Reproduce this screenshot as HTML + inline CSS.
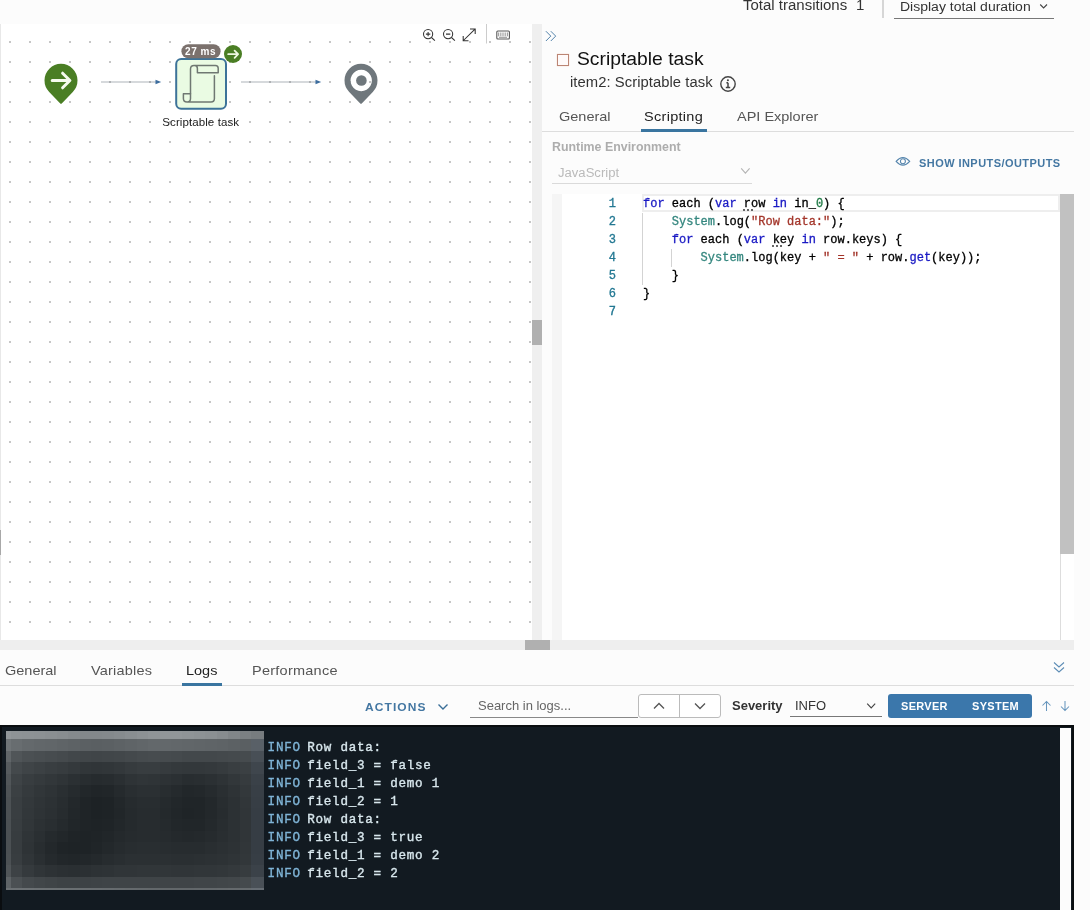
<!DOCTYPE html>
<html>
<head>
<meta charset="utf-8">
<style>
*{box-sizing:border-box;margin:0;padding:0}
html,body{width:1090px;height:910px;overflow:hidden;background:#fcfcfc;font-family:"Liberation Sans",sans-serif;color:#333}
.abs{position:absolute}
#root{position:relative;width:1090px;height:910px;overflow:hidden;will-change:transform}
.t{position:absolute;white-space:nowrap;line-height:1;transform-origin:0 0;transform:scaleX(1.07)}
/* canvas */
#canvas{left:0;top:24px;width:532px;height:616px;background-color:#fff;
 background-image:radial-gradient(circle, #c6c6c6 0, #c6c6c6 1px, rgba(255,255,255,0) 1.3px);
 background-size:20px 20px;background-position:0px 8px;}
#vbar{left:532px;top:24px;width:10px;height:616px;background:#efefef}
#vthumb{left:532px;top:320px;width:10px;height:25px;background:#b0b0b0}
#hbar{left:0;top:640px;width:1074px;height:10px;background:#eeeeee}
#hthumb{left:525px;top:640px;width:25px;height:10px;background:#b0b0b0}
#rpanel{left:542px;top:24px;width:532px;height:616px;background:transparent}
#editor{left:562px;top:194px;width:498px;height:446px;background:#fff}
#egut{left:552px;top:194px;width:10px;height:446px;background:#f5f5f5}
#curline{left:642px;top:194px;width:418px;height:18px;border:2px solid #eee}
#escroll{left:1060px;top:194px;width:14px;height:446px;background:#fff;border-left:1px solid #ddd}
#ethumb{left:1060px;top:194px;width:14px;height:360px;background:#c1c1c1}
.code{font-family:"Liberation Mono",monospace;font-size:12px;line-height:18px;color:#000;white-space:pre;-webkit-text-stroke:0.3px}
.ln{font-family:"Liberation Mono",monospace;font-size:12px;line-height:18px;color:#237893;text-align:right;width:20px;-webkit-text-stroke:0.3px}
.kw{color:#1a1ac4}.ty{color:#35877f}.st{color:#a3352a}.nu{color:#1f7a45}
/* bottom */
#log{left:0;top:725px;width:1074px;height:185px;background:#121a21;border:2px solid #0a0d10;border-bottom:none}
#lscroll{left:1060px;top:728px;width:11px;height:182px;background:#fcfcfc}
.lg{font-family:"Liberation Mono",monospace;font-size:12.6px;line-height:18px;color:#d8e7ed;white-space:pre;-webkit-text-stroke:0.35px}
.lg i{font-style:normal;color:#7ab3d9}
</style>
</head>
<body>
<div id="root">
 <!-- header -->
 <div class="t" style="left:742.5px;top:-1.77px;font-size:14.02px;color:#333">Total transitions</div>
 <div class="t" style="left:856px;top:-2.17px;font-size:14.02px;color:#333">1</div>
 <div class="abs" style="left:882px;top:0;width:2px;height:18px;background:#d6d6d6"></div>
 <div class="t" style="left:900px;top:-0.22px;font-size:13.08px;color:#333">Display total duration</div>
 <div class="abs" style="left:894px;top:18px;width:160px;height:1px;background:#777"></div>
 <svg class="abs" style="left:1036px;top:1px" width="14" height="10" viewBox="0 0 14 10"><path d="M4.2 3.5 L7.6 7 L11 3.5" fill="none" stroke="#444" stroke-width="1.1"/></svg>

 <!-- canvas -->
 <div id="canvas" class="abs"></div>
 <div class="abs" style="left:0;top:24px;width:1px;height:616px;background:#e8e8e8"></div>
 <div class="abs" style="left:0;top:530px;width:1px;height:25px;background:#a8a8a8"></div>
 <div id="vbar" class="abs"></div><div id="vthumb" class="abs"></div>
 <div id="rpanel" class="abs"></div>

 <!-- workflow svg -->
 <svg class="abs" style="left:0;top:24px" width="532" height="616" viewBox="0 24 532 616">
  <!-- start pin -->
  <path d="M49.2 91.9 A16.5 16.5 0 1 1 72.8 91.9 L62 103.3 Q61 104.4 60 103.3 Z" fill="#4a7e24"/>
  <path d="M52.2 80.5 H69 M62.6 73.2 L69.9 80.5 L62.6 87.8" fill="none" stroke="#f6fbef" stroke-width="3" stroke-linecap="round" stroke-linejoin="round"/>
  <!-- link 1 -->
  <line x1="101" y1="82" x2="157" y2="82" stroke="rgba(120,130,140,0.3)" stroke-width="2"/>
  <path d="M155.5 79.8 L161.2 82 L155.5 84.2 Z" fill="#3d6d9e"/>
  <!-- task -->
  <rect x="176.2" y="59" width="49.8" height="49.8" rx="5" ry="5" fill="#eafbe3" stroke="#3d7399" stroke-width="2"/>
  <g fill="none" stroke="#6f7872" stroke-width="1.5" stroke-linejoin="round" stroke-linecap="round">
   <path d="M190.5 93.7 V69 Q190.5 65.5 194 65.5 H215.5 Q218.2 65.5 218.2 68.3 V72.8 H197.4 V68.5 Q197.4 65.5 194.5 65.5"/>
   <path d="M214.4 75.8 V98.5 Q214.4 102 211 102 H187 Q183.4 102 183.4 98.5 V93.7 H190.5 V98.5 Q190.5 102 187.3 102"/>
  </g>
  <!-- badge -->
  <rect x="181.4" y="44.2" width="39.2" height="14" rx="7" fill="#7b716d"/>
  <text x="200.6" y="54.9" font-family="Liberation Sans, sans-serif" font-weight="bold" font-size="10" fill="#fff" text-anchor="middle" letter-spacing="0.55">27 ms</text>
  <circle cx="233" cy="54" r="9" fill="#4a7e24"/>
  <path d="M228.2 54.2 H237.5 M234.6 50.6 L238.1 54.2 L234.6 57.8" fill="none" stroke="#eef8e0" stroke-width="1.8" stroke-linecap="round" stroke-linejoin="round"/>
  <text transform="translate(200.7,125.6) scale(1.075,1)" x="0" y="0" font-family="Liberation Sans, sans-serif" font-size="10.75" fill="#222" text-anchor="middle" letter-spacing="0.06">Scriptable task</text>
  <!-- link 2 -->
  <line x1="241" y1="82" x2="317" y2="82" stroke="rgba(120,130,140,0.3)" stroke-width="2"/>
  <path d="M315.5 79.8 L321.2 82 L315.5 84.2 Z" fill="#3d6d9e"/>
  <!-- end pin -->
  <path fill-rule="evenodd" d="M349.2 91.9 A16.5 16.5 0 1 1 372.8 91.9 L362 103.3 Q361 104.4 360 103.3 Z M361.2 69.8 a10.7 10.7 0 1 0 0.01 0 Z" fill="#6f777c"/>
  <circle cx="361.4" cy="80.5" r="5.3" fill="#6f777c"/>
  <!-- toolbar -->
  <g fill="none" stroke="#333" stroke-width="1.05">
   <circle cx="428.1" cy="34.1" r="4.6"/><path d="M431.5 37.5 L434.9 40.7 M425.9 34.1 H430.3 M428.1 31.9 V36.3"/>
   <circle cx="448.1" cy="34.1" r="4.6"/><path d="M451.5 37.5 L454.9 40.7 M446 34.1 H450.3"/>
   <path d="M463.4 40.5 L475 29.1 M470 28.9 H475.2 V34.1 M463.2 36.1 V40.7 H468.5"/>
   <rect x="496.8" y="31" width="12.6" height="8" rx="1" stroke="#5a5a5a" stroke-width="1.1"/>
   <path d="M498.5 32.5 V36.3 M500.3 32.5 V36.3 M502.1 32.5 V36.3 M503.9 32.5 V36.3 M505.7 32.5 V36.3 M507.5 32.5 V36.3" stroke="#8a8a8a" stroke-width="0.8"/>
   <path d="M499 37.3 H507" stroke="#777" stroke-width="0.8"/>
  </g>
  <line x1="486.5" y1="24" x2="486.5" y2="43.5" stroke="#ccc" stroke-width="1"/>
 </svg>

 <!-- right panel header -->
 <svg class="abs" style="left:545px;top:30px" width="12" height="12" viewBox="0 0 12 12"><path d="M0.9 1.2 L5.8 6.1 L0.9 11 M5.8 1.2 L10.7 6.1 L5.8 11" fill="none" stroke="#5383ab" stroke-width="1"/></svg>
 <div class="abs" style="left:557px;top:54px;width:12px;height:12px;border:1px solid #bb8574;background:#fefafa;box-shadow:0 0 1px #f0c0b0"></div>
 <div class="t" style="left:577px;top:49.67px;font-size:18.04px;color:#111">Scriptable task</div>
 <div class="t" style="left:570px;top:76.4px;font-size:13.83px;letter-spacing:0.05px;color:#333">item2: Scriptable task</div>
 <svg class="abs" style="left:720px;top:76px" width="16" height="16" viewBox="0 0 16 16"><circle cx="8" cy="8" r="7.2" fill="none" stroke="#444" stroke-width="1.4"/><path d="M8 6.7 V11.6 M6.4 6.7 H8 M5.8 11.6 H10.2" stroke="#444" stroke-width="1.5" fill="none"/><circle cx="7.9" cy="4.2" r="1.05" fill="#444"/></svg>
 <div class="t" style="left:559px;top:109.80px;font-size:13.55px;color:#555">General</div>
 <div class="t" style="left:644px;top:109.80px;font-size:13.55px;letter-spacing:0.28px;color:#222">Scripting</div>
 <div class="t" style="left:737px;top:109.80px;font-size:13.55px;color:#555">API Explorer</div>
 <div class="abs" style="left:542px;top:131px;width:532px;height:1px;background:#ddd"></div>
 <div class="abs" style="left:641px;top:129px;width:66px;height:3px;background:#3a75a0"></div>
 <div class="t" style="left:552px;top:139.70px;font-size:13.00px;font-weight:bold;color:#adadad;transform:scaleX(0.952)">Runtime Environment</div>
 <div class="t" style="left:558px;top:166.5px;font-size:12.0px;color:#bababa;transform:scaleX(1.09)">JavaScript</div>
 <svg class="abs" style="left:738px;top:166px" width="14" height="10" viewBox="0 0 14 10"><path d="M3.2 2.3 L7.4 7.2 L11.6 2.3" fill="none" stroke="#b4b4b4" stroke-width="1.1"/></svg>
 <div class="abs" style="left:552px;top:183px;width:200px;height:1px;background:#dadada"></div>
 <svg class="abs" style="left:895px;top:155px" width="16" height="12" viewBox="0 0 16 12"><path d="M1.1 6.3 Q7.9 -1.3 14.7 6.3 Q7.9 13.9 1.1 6.3 Z" fill="none" stroke="#5585ad" stroke-width="1.05"/><circle cx="7.9" cy="6.3" r="2.5" fill="none" stroke="#5585ad" stroke-width="1.05"/></svg>
 <div class="t" style="left:919px;top:158.61px;font-size:10.28px;font-weight:bold;color:#4477a2;letter-spacing:0.42px">SHOW INPUTS/OUTPUTS</div>

 <!-- editor -->
 <div id="egut" class="abs"></div>
 <div id="editor" class="abs"></div>
 <div id="curline" class="abs"></div>
 <div id="escroll" class="abs"></div><div id="ethumb" class="abs"></div>
 <div class="abs ln" style="left:596px;top:195px">1<br>2<br>3<br>4<br>5<br>6<br>7</div>
 <div class="abs" style="left:642px;top:213px;width:1px;height:72px;background:#d3d3d3"></div>
 <div class="abs" style="left:671px;top:249px;width:1px;height:18px;background:#d3d3d3"></div>
 <div class="abs" style="left:743px;top:209px;width:10px;height:2px;background:repeating-linear-gradient(90deg,#666 0,#666 2px,transparent 2px,transparent 4px)"></div>
 <div class="abs" style="left:772px;top:245px;width:10px;height:2px;background:repeating-linear-gradient(90deg,#666 0,#666 2px,transparent 2px,transparent 4px)"></div>
 <div class="abs code" style="left:643px;top:195px"><span class="kw">for</span> each (<span class="kw">var</span> row <span class="kw">in</span> in_<span class="nu">0</span>) {
    <span class="ty">System</span>.log(<span class="st">"Row data<b style="font-weight:normal">:</b>"</span>);
    <span class="kw">for</span> each (<span class="kw">var</span> key <span class="kw">in</span> row.keys) {
        <span class="ty">System</span>.log(key + <span class="st">" = "</span> + row.<span class="kw">get</span>(key));
    }
}</div>

 <!-- scrollbars -->
 <div id="hbar" class="abs"></div><div id="hthumb" class="abs"></div>

 <!-- bottom tabs -->
 <div class="t" style="left:5px;top:663.80px;font-size:13.55px;color:#555">General</div>
 <div class="t" style="left:91px;top:663.80px;font-size:13.55px;letter-spacing:0.19px;color:#555">Variables</div>
 <div class="t" style="left:186px;top:663.80px;font-size:13.55px;color:#222">Logs</div>
 <div class="t" style="left:252px;top:663.80px;font-size:13.55px;letter-spacing:0.23px;color:#555">Performance</div>
 <div class="abs" style="left:0;top:685px;width:1074px;height:1px;background:#ddd"></div>
 <div class="abs" style="left:182px;top:683px;width:40px;height:3px;background:#3a75a0"></div>
 <svg class="abs" style="left:1053px;top:661px" width="12" height="13" viewBox="0 0 12 13"><path d="M1 1.5 L6 6 L11 1.5 M1 6.5 L6 11 L11 6.5" fill="none" stroke="#5c8cb5" stroke-width="1.05"/></svg>

 <!-- log toolbar -->
 <div class="t" style="left:365px;top:701.66px;font-size:11.21px;font-weight:bold;color:#4477a2;letter-spacing:1.03px">ACTIONS</div>
 <svg class="abs" style="left:437px;top:702px" width="12" height="10" viewBox="0 0 12 10"><path d="M1.5 2.5 L6 7 L10.5 2.5" fill="none" stroke="#3a6f98" stroke-width="1.4"/></svg>
 <div class="t" style="left:478px;top:699.72px;font-size:12.15px;color:#666">Search in logs...</div>
 <div class="abs" style="left:470px;top:717px;width:168px;height:1px;background:#888"></div>
 <div class="abs" style="left:638px;top:694px;width:83px;height:24px;border:1px solid #bbb;border-radius:3px;background:#fff"></div>
 <div class="abs" style="left:679px;top:694px;width:1px;height:24px;background:#bbb"></div>
 <svg class="abs" style="left:652px;top:701px" width="14" height="10" viewBox="0 0 14 10"><path d="M2 7.5 L7 2.5 L12 7.5" fill="none" stroke="#555" stroke-width="1.3"/></svg>
 <svg class="abs" style="left:693px;top:701px" width="14" height="10" viewBox="0 0 14 10"><path d="M2 2.5 L7 7.5 L12 2.5" fill="none" stroke="#555" stroke-width="1.3"/></svg>
 <div class="t" style="left:732px;top:699.72px;font-size:12.15px;font-weight:bold;color:#333">Severity</div>
 <div class="t" style="left:795px;top:699.72px;font-size:12.15px;color:#333">INFO</div>
 <svg class="abs" style="left:865px;top:701px" width="12" height="10" viewBox="0 0 12 10"><path d="M2.2 2.6 L6.2 6.8 L10.2 2.6" fill="none" stroke="#444" stroke-width="1.15"/></svg>
 <div class="abs" style="left:790px;top:716px;width:92px;height:1px;background:#777"></div>
 <div class="abs" style="left:888px;top:694px;width:144px;height:24px;border-radius:3px;background:#3b77ab"></div>
 <div class="t" style="left:901px;top:701.61px;font-size:10.28px;font-weight:bold;color:#fff;letter-spacing:0.28px">SERVER</div>
 <div class="t" style="left:972px;top:701.61px;font-size:10.28px;font-weight:bold;color:#fff;letter-spacing:0.28px">SYSTEM</div>
 <svg class="abs" style="left:1041px;top:700px" width="30" height="12" viewBox="0 0 30 12"><path d="M5.5 11 V1.5 M1.5 5.5 L5.5 1.5 L9.5 5.5 M24 1 V10.5 M20 6.5 L24 10.5 L28 6.5" fill="none" stroke="#6796bd" stroke-width="1.05"/></svg>

 <!-- log -->
 <div id="log" class="abs"></div>
 <div id="lscroll" class="abs"></div>
 <svg id="blur" class="abs" style="left:6px;top:731px" width="257.5" height="158.5" viewBox="0 0 257.5 158.5" shape-rendering="crispEdges"><rect x="0.0" y="0.0" width="5.2" height="8.5" fill="#92979a"/><rect x="4.9" y="0.0" width="11.7" height="8.5" fill="#8e9396"/><rect x="16.3" y="0.0" width="11.7" height="8.5" fill="#8d9295"/><rect x="27.8" y="0.0" width="11.7" height="8.5" fill="#8c9194"/><rect x="39.2" y="0.0" width="11.7" height="8.5" fill="#8a8f92"/><rect x="50.6" y="0.0" width="11.7" height="8.5" fill="#888d90"/><rect x="62.0" y="0.0" width="11.7" height="8.5" fill="#858a8d"/><rect x="73.5" y="0.0" width="11.7" height="8.5" fill="#83888b"/><rect x="84.9" y="0.0" width="11.7" height="8.5" fill="#83888b"/><rect x="96.3" y="0.0" width="11.7" height="8.5" fill="#84898c"/><rect x="107.8" y="0.0" width="11.7" height="8.5" fill="#868b8e"/><rect x="119.2" y="0.0" width="11.7" height="8.5" fill="#898e91"/><rect x="130.6" y="0.0" width="11.7" height="8.5" fill="#8c9194"/><rect x="142.1" y="0.0" width="11.7" height="8.5" fill="#8f9497"/><rect x="153.5" y="0.0" width="11.7" height="8.5" fill="#919699"/><rect x="164.9" y="0.0" width="11.7" height="8.5" fill="#919699"/><rect x="176.4" y="0.0" width="11.7" height="8.5" fill="#8f9497"/><rect x="187.8" y="0.0" width="11.7" height="8.5" fill="#8d9295"/><rect x="199.2" y="0.0" width="11.7" height="8.5" fill="#8b9093"/><rect x="210.6" y="0.0" width="11.7" height="8.5" fill="#878c8f"/><rect x="222.1" y="0.0" width="11.7" height="8.5" fill="#818689"/><rect x="233.5" y="0.0" width="11.7" height="8.5" fill="#7b8083"/><rect x="244.9" y="0.0" width="12.9" height="8.5" fill="#777c7f"/><rect x="0.0" y="8.2" width="5.2" height="11.8" fill="#6f7477"/><rect x="4.9" y="8.2" width="11.7" height="11.8" fill="#686d70"/><rect x="16.3" y="8.2" width="11.7" height="11.8" fill="#64696c"/><rect x="27.8" y="8.2" width="11.7" height="11.8" fill="#62676a"/><rect x="39.2" y="8.2" width="11.7" height="11.8" fill="#616669"/><rect x="50.6" y="8.2" width="11.7" height="11.8" fill="#5f6467"/><rect x="62.0" y="8.2" width="11.7" height="11.8" fill="#5d6265"/><rect x="73.5" y="8.2" width="11.7" height="11.8" fill="#5b6063"/><rect x="84.9" y="8.2" width="11.7" height="11.8" fill="#5a5f62"/><rect x="96.3" y="8.2" width="11.7" height="11.8" fill="#5b6063"/><rect x="107.8" y="8.2" width="11.7" height="11.8" fill="#5d6265"/><rect x="119.2" y="8.2" width="11.7" height="11.8" fill="#5f6467"/><rect x="130.6" y="8.2" width="11.7" height="11.8" fill="#616669"/><rect x="142.1" y="8.2" width="11.7" height="11.8" fill="#63686b"/><rect x="153.5" y="8.2" width="11.7" height="11.8" fill="#63686b"/><rect x="164.9" y="8.2" width="11.7" height="11.8" fill="#62676a"/><rect x="176.4" y="8.2" width="11.7" height="11.8" fill="#616669"/><rect x="187.8" y="8.2" width="11.7" height="11.8" fill="#606568"/><rect x="199.2" y="8.2" width="11.7" height="11.8" fill="#5f6467"/><rect x="210.6" y="8.2" width="11.7" height="11.8" fill="#5e6366"/><rect x="222.1" y="8.2" width="11.7" height="11.8" fill="#5c6164"/><rect x="233.5" y="8.2" width="11.7" height="11.8" fill="#5a5f62"/><rect x="244.9" y="8.2" width="12.9" height="11.8" fill="#596067"/><rect x="0.0" y="19.7" width="5.2" height="11.8" fill="#616669"/><rect x="4.9" y="19.7" width="11.7" height="11.8" fill="#505558"/><rect x="16.3" y="19.7" width="11.7" height="11.8" fill="#4b5053"/><rect x="27.8" y="19.7" width="11.7" height="11.8" fill="#494e51"/><rect x="39.2" y="19.7" width="11.7" height="11.8" fill="#474c4f"/><rect x="50.6" y="19.7" width="11.7" height="11.8" fill="#454a4d"/><rect x="62.0" y="19.7" width="11.7" height="11.8" fill="#42474a"/><rect x="73.5" y="19.7" width="11.7" height="11.8" fill="#414649"/><rect x="84.9" y="19.7" width="11.7" height="11.8" fill="#404548"/><rect x="96.3" y="19.7" width="11.7" height="11.8" fill="#414649"/><rect x="107.8" y="19.7" width="11.7" height="11.8" fill="#42474a"/><rect x="119.2" y="19.7" width="11.7" height="11.8" fill="#44494c"/><rect x="130.6" y="19.7" width="11.7" height="11.8" fill="#464b4e"/><rect x="142.1" y="19.7" width="11.7" height="11.8" fill="#474c4f"/><rect x="153.5" y="19.7" width="11.7" height="11.8" fill="#464b4e"/><rect x="164.9" y="19.7" width="11.7" height="11.8" fill="#454a4d"/><rect x="176.4" y="19.7" width="11.7" height="11.8" fill="#43484b"/><rect x="187.8" y="19.7" width="11.7" height="11.8" fill="#43484b"/><rect x="199.2" y="19.7" width="11.7" height="11.8" fill="#43484b"/><rect x="210.6" y="19.7" width="11.7" height="11.8" fill="#44494c"/><rect x="222.1" y="19.7" width="11.7" height="11.8" fill="#454a4d"/><rect x="233.5" y="19.7" width="11.7" height="11.8" fill="#464b4e"/><rect x="244.9" y="19.7" width="12.9" height="11.8" fill="#484f56"/><rect x="0.0" y="31.1" width="5.2" height="11.8" fill="#565b5e"/><rect x="4.9" y="31.1" width="11.7" height="11.8" fill="#44494c"/><rect x="16.3" y="31.1" width="11.7" height="11.8" fill="#3f4447"/><rect x="27.8" y="31.1" width="11.7" height="11.8" fill="#3c4144"/><rect x="39.2" y="31.1" width="11.7" height="11.8" fill="#393e41"/><rect x="50.6" y="31.1" width="11.7" height="11.8" fill="#373c3f"/><rect x="62.0" y="31.1" width="11.7" height="11.8" fill="#34393c"/><rect x="73.5" y="31.1" width="11.7" height="11.8" fill="#313639"/><rect x="84.9" y="31.1" width="11.7" height="11.8" fill="#303538"/><rect x="96.3" y="31.1" width="11.7" height="11.8" fill="#313639"/><rect x="107.8" y="31.1" width="11.7" height="11.8" fill="#33383b"/><rect x="119.2" y="31.1" width="11.7" height="11.8" fill="#363b3e"/><rect x="130.6" y="31.1" width="11.7" height="11.8" fill="#383d40"/><rect x="142.1" y="31.1" width="11.7" height="11.8" fill="#383d40"/><rect x="153.5" y="31.1" width="11.7" height="11.8" fill="#363b3e"/><rect x="164.9" y="31.1" width="11.7" height="11.8" fill="#34393c"/><rect x="176.4" y="31.1" width="11.7" height="11.8" fill="#33383b"/><rect x="187.8" y="31.1" width="11.7" height="11.8" fill="#33383b"/><rect x="199.2" y="31.1" width="11.7" height="11.8" fill="#34393c"/><rect x="210.6" y="31.1" width="11.7" height="11.8" fill="#363b3e"/><rect x="222.1" y="31.1" width="11.7" height="11.8" fill="#393e41"/><rect x="233.5" y="31.1" width="11.7" height="11.8" fill="#3b4043"/><rect x="244.9" y="31.1" width="12.9" height="11.8" fill="#3f464d"/><rect x="0.0" y="42.6" width="5.2" height="11.8" fill="#515659"/><rect x="4.9" y="42.6" width="11.7" height="11.8" fill="#3e4346"/><rect x="16.3" y="42.6" width="11.7" height="11.8" fill="#383d40"/><rect x="27.8" y="42.6" width="11.7" height="11.8" fill="#353a3d"/><rect x="39.2" y="42.6" width="11.7" height="11.8" fill="#32373a"/><rect x="50.6" y="42.6" width="11.7" height="11.8" fill="#2f3437"/><rect x="62.0" y="42.6" width="11.7" height="11.8" fill="#2b3033"/><rect x="73.5" y="42.6" width="11.7" height="11.8" fill="#282d30"/><rect x="84.9" y="42.6" width="11.7" height="11.8" fill="#262b2e"/><rect x="96.3" y="42.6" width="11.7" height="11.8" fill="#272c2f"/><rect x="107.8" y="42.6" width="11.7" height="11.8" fill="#2a2f32"/><rect x="119.2" y="42.6" width="11.7" height="11.8" fill="#2e3336"/><rect x="130.6" y="42.6" width="11.7" height="11.8" fill="#303538"/><rect x="142.1" y="42.6" width="11.7" height="11.8" fill="#2f3437"/><rect x="153.5" y="42.6" width="11.7" height="11.8" fill="#2d3235"/><rect x="164.9" y="42.6" width="11.7" height="11.8" fill="#2b3033"/><rect x="176.4" y="42.6" width="11.7" height="11.8" fill="#282d30"/><rect x="187.8" y="42.6" width="11.7" height="11.8" fill="#292e31"/><rect x="199.2" y="42.6" width="11.7" height="11.8" fill="#2b3033"/><rect x="210.6" y="42.6" width="11.7" height="11.8" fill="#2e3336"/><rect x="222.1" y="42.6" width="11.7" height="11.8" fill="#32373a"/><rect x="233.5" y="42.6" width="11.7" height="11.8" fill="#363b3e"/><rect x="244.9" y="42.6" width="12.9" height="11.8" fill="#3a4148"/><rect x="0.0" y="54.0" width="5.2" height="11.8" fill="#4e5356"/><rect x="4.9" y="54.0" width="11.7" height="11.8" fill="#3b4043"/><rect x="16.3" y="54.0" width="11.7" height="11.8" fill="#353a3d"/><rect x="27.8" y="54.0" width="11.7" height="11.8" fill="#313639"/><rect x="39.2" y="54.0" width="11.7" height="11.8" fill="#2e3336"/><rect x="50.6" y="54.0" width="11.7" height="11.8" fill="#2a2f32"/><rect x="62.0" y="54.0" width="11.7" height="11.8" fill="#262b2e"/><rect x="73.5" y="54.0" width="11.7" height="11.8" fill="#22272a"/><rect x="84.9" y="54.0" width="11.7" height="11.8" fill="#202528"/><rect x="96.3" y="54.0" width="11.7" height="11.8" fill="#212629"/><rect x="107.8" y="54.0" width="11.7" height="11.8" fill="#252a2d"/><rect x="119.2" y="54.0" width="11.7" height="11.8" fill="#292e31"/><rect x="130.6" y="54.0" width="11.7" height="11.8" fill="#2b3033"/><rect x="142.1" y="54.0" width="11.7" height="11.8" fill="#2b3033"/><rect x="153.5" y="54.0" width="11.7" height="11.8" fill="#282d30"/><rect x="164.9" y="54.0" width="11.7" height="11.8" fill="#252a2d"/><rect x="176.4" y="54.0" width="11.7" height="11.8" fill="#22272a"/><rect x="187.8" y="54.0" width="11.7" height="11.8" fill="#23282b"/><rect x="199.2" y="54.0" width="11.7" height="11.8" fill="#262b2e"/><rect x="210.6" y="54.0" width="11.7" height="11.8" fill="#2a2f32"/><rect x="222.1" y="54.0" width="11.7" height="11.8" fill="#2e3336"/><rect x="233.5" y="54.0" width="11.7" height="11.8" fill="#33383b"/><rect x="244.9" y="54.0" width="12.9" height="11.8" fill="#383f46"/><rect x="0.0" y="65.5" width="5.2" height="11.8" fill="#4c5154"/><rect x="4.9" y="65.5" width="11.7" height="11.8" fill="#393e41"/><rect x="16.3" y="65.5" width="11.7" height="11.8" fill="#33383b"/><rect x="27.8" y="65.5" width="11.7" height="11.8" fill="#2f3437"/><rect x="39.2" y="65.5" width="11.7" height="11.8" fill="#2c3134"/><rect x="50.6" y="65.5" width="11.7" height="11.8" fill="#282d30"/><rect x="62.0" y="65.5" width="11.7" height="11.8" fill="#23282b"/><rect x="73.5" y="65.5" width="11.7" height="11.8" fill="#1f2427"/><rect x="84.9" y="65.5" width="11.7" height="11.8" fill="#1d2225"/><rect x="96.3" y="65.5" width="11.7" height="11.8" fill="#1e2326"/><rect x="107.8" y="65.5" width="11.7" height="11.8" fill="#22272a"/><rect x="119.2" y="65.5" width="11.7" height="11.8" fill="#262b2e"/><rect x="130.6" y="65.5" width="11.7" height="11.8" fill="#282d30"/><rect x="142.1" y="65.5" width="11.7" height="11.8" fill="#282d30"/><rect x="153.5" y="65.5" width="11.7" height="11.8" fill="#252a2d"/><rect x="164.9" y="65.5" width="11.7" height="11.8" fill="#22272a"/><rect x="176.4" y="65.5" width="11.7" height="11.8" fill="#202528"/><rect x="187.8" y="65.5" width="11.7" height="11.8" fill="#202528"/><rect x="199.2" y="65.5" width="11.7" height="11.8" fill="#23282b"/><rect x="210.6" y="65.5" width="11.7" height="11.8" fill="#282d30"/><rect x="222.1" y="65.5" width="11.7" height="11.8" fill="#2c3134"/><rect x="233.5" y="65.5" width="11.7" height="11.8" fill="#313639"/><rect x="244.9" y="65.5" width="12.9" height="11.8" fill="#373e45"/><rect x="0.0" y="76.9" width="5.2" height="11.8" fill="#4c5154"/><rect x="4.9" y="76.9" width="11.7" height="11.8" fill="#393e41"/><rect x="16.3" y="76.9" width="11.7" height="11.8" fill="#32373a"/><rect x="27.8" y="76.9" width="11.7" height="11.8" fill="#2e3336"/><rect x="39.2" y="76.9" width="11.7" height="11.8" fill="#2b3033"/><rect x="50.6" y="76.9" width="11.7" height="11.8" fill="#272c2f"/><rect x="62.0" y="76.9" width="11.7" height="11.8" fill="#22272a"/><rect x="73.5" y="76.9" width="11.7" height="11.8" fill="#1f2427"/><rect x="84.9" y="76.9" width="11.7" height="11.8" fill="#1d2225"/><rect x="96.3" y="76.9" width="11.7" height="11.8" fill="#1e2326"/><rect x="107.8" y="76.9" width="11.7" height="11.8" fill="#212629"/><rect x="119.2" y="76.9" width="11.7" height="11.8" fill="#252a2d"/><rect x="130.6" y="76.9" width="11.7" height="11.8" fill="#272c2f"/><rect x="142.1" y="76.9" width="11.7" height="11.8" fill="#272c2f"/><rect x="153.5" y="76.9" width="11.7" height="11.8" fill="#24292c"/><rect x="164.9" y="76.9" width="11.7" height="11.8" fill="#212629"/><rect x="176.4" y="76.9" width="11.7" height="11.8" fill="#1f2427"/><rect x="187.8" y="76.9" width="11.7" height="11.8" fill="#202528"/><rect x="199.2" y="76.9" width="11.7" height="11.8" fill="#23282b"/><rect x="210.6" y="76.9" width="11.7" height="11.8" fill="#272c2f"/><rect x="222.1" y="76.9" width="11.7" height="11.8" fill="#2c3134"/><rect x="233.5" y="76.9" width="11.7" height="11.8" fill="#303538"/><rect x="244.9" y="76.9" width="12.9" height="11.8" fill="#363d44"/><rect x="0.0" y="88.4" width="5.2" height="11.8" fill="#4b5053"/><rect x="4.9" y="88.4" width="11.7" height="11.8" fill="#383d40"/><rect x="16.3" y="88.4" width="11.7" height="11.8" fill="#313639"/><rect x="27.8" y="88.4" width="11.7" height="11.8" fill="#2c3134"/><rect x="39.2" y="88.4" width="11.7" height="11.8" fill="#292e31"/><rect x="50.6" y="88.4" width="11.7" height="11.8" fill="#252a2d"/><rect x="62.0" y="88.4" width="11.7" height="11.8" fill="#212629"/><rect x="73.5" y="88.4" width="11.7" height="11.8" fill="#1f2427"/><rect x="84.9" y="88.4" width="11.7" height="11.8" fill="#1e2326"/><rect x="96.3" y="88.4" width="11.7" height="11.8" fill="#1f2427"/><rect x="107.8" y="88.4" width="11.7" height="11.8" fill="#22272a"/><rect x="119.2" y="88.4" width="11.7" height="11.8" fill="#252a2d"/><rect x="130.6" y="88.4" width="11.7" height="11.8" fill="#272c2f"/><rect x="142.1" y="88.4" width="11.7" height="11.8" fill="#272c2f"/><rect x="153.5" y="88.4" width="11.7" height="11.8" fill="#252a2d"/><rect x="164.9" y="88.4" width="11.7" height="11.8" fill="#22272a"/><rect x="176.4" y="88.4" width="11.7" height="11.8" fill="#212629"/><rect x="187.8" y="88.4" width="11.7" height="11.8" fill="#212629"/><rect x="199.2" y="88.4" width="11.7" height="11.8" fill="#24292c"/><rect x="210.6" y="88.4" width="11.7" height="11.8" fill="#282d30"/><rect x="222.1" y="88.4" width="11.7" height="11.8" fill="#2c3134"/><rect x="233.5" y="88.4" width="11.7" height="11.8" fill="#303538"/><rect x="244.9" y="88.4" width="12.9" height="11.8" fill="#363d44"/><rect x="0.0" y="99.8" width="5.2" height="11.8" fill="#4b5053"/><rect x="4.9" y="99.8" width="11.7" height="11.8" fill="#373c3f"/><rect x="16.3" y="99.8" width="11.7" height="11.8" fill="#2f3437"/><rect x="27.8" y="99.8" width="11.7" height="11.8" fill="#2a2f32"/><rect x="39.2" y="99.8" width="11.7" height="11.8" fill="#252a2d"/><rect x="50.6" y="99.8" width="11.7" height="11.8" fill="#22272a"/><rect x="62.0" y="99.8" width="11.7" height="11.8" fill="#1f2427"/><rect x="73.5" y="99.8" width="11.7" height="11.8" fill="#1e2326"/><rect x="84.9" y="99.8" width="11.7" height="11.8" fill="#1f2427"/><rect x="96.3" y="99.8" width="11.7" height="11.8" fill="#212629"/><rect x="107.8" y="99.8" width="11.7" height="11.8" fill="#24292c"/><rect x="119.2" y="99.8" width="11.7" height="11.8" fill="#262b2e"/><rect x="130.6" y="99.8" width="11.7" height="11.8" fill="#272c2f"/><rect x="142.1" y="99.8" width="11.7" height="11.8" fill="#272c2f"/><rect x="153.5" y="99.8" width="11.7" height="11.8" fill="#262b2e"/><rect x="164.9" y="99.8" width="11.7" height="11.8" fill="#24292c"/><rect x="176.4" y="99.8" width="11.7" height="11.8" fill="#23282b"/><rect x="187.8" y="99.8" width="11.7" height="11.8" fill="#24292c"/><rect x="199.2" y="99.8" width="11.7" height="11.8" fill="#262b2e"/><rect x="210.6" y="99.8" width="11.7" height="11.8" fill="#292e31"/><rect x="222.1" y="99.8" width="11.7" height="11.8" fill="#2c3134"/><rect x="233.5" y="99.8" width="11.7" height="11.8" fill="#303538"/><rect x="244.9" y="99.8" width="12.9" height="11.8" fill="#363d44"/><rect x="0.0" y="111.3" width="5.2" height="11.8" fill="#4b5053"/><rect x="4.9" y="111.3" width="11.7" height="11.8" fill="#373c3f"/><rect x="16.3" y="111.3" width="11.7" height="11.8" fill="#2e3336"/><rect x="27.8" y="111.3" width="11.7" height="11.8" fill="#282d30"/><rect x="39.2" y="111.3" width="11.7" height="11.8" fill="#23282b"/><rect x="50.6" y="111.3" width="11.7" height="11.8" fill="#1f2427"/><rect x="62.0" y="111.3" width="11.7" height="11.8" fill="#1e2326"/><rect x="73.5" y="111.3" width="11.7" height="11.8" fill="#1e2326"/><rect x="84.9" y="111.3" width="11.7" height="11.8" fill="#202528"/><rect x="96.3" y="111.3" width="11.7" height="11.8" fill="#23282b"/><rect x="107.8" y="111.3" width="11.7" height="11.8" fill="#262b2e"/><rect x="119.2" y="111.3" width="11.7" height="11.8" fill="#282d30"/><rect x="130.6" y="111.3" width="11.7" height="11.8" fill="#292e31"/><rect x="142.1" y="111.3" width="11.7" height="11.8" fill="#292e31"/><rect x="153.5" y="111.3" width="11.7" height="11.8" fill="#282d30"/><rect x="164.9" y="111.3" width="11.7" height="11.8" fill="#272c2f"/><rect x="176.4" y="111.3" width="11.7" height="11.8" fill="#272c2f"/><rect x="187.8" y="111.3" width="11.7" height="11.8" fill="#272c2f"/><rect x="199.2" y="111.3" width="11.7" height="11.8" fill="#292e31"/><rect x="210.6" y="111.3" width="11.7" height="11.8" fill="#2b3033"/><rect x="222.1" y="111.3" width="11.7" height="11.8" fill="#2d3235"/><rect x="233.5" y="111.3" width="11.7" height="11.8" fill="#313639"/><rect x="244.9" y="111.3" width="12.9" height="11.8" fill="#363d44"/><rect x="0.0" y="122.7" width="5.2" height="11.8" fill="#4c5154"/><rect x="4.9" y="122.7" width="11.7" height="11.8" fill="#383d40"/><rect x="16.3" y="122.7" width="11.7" height="11.8" fill="#303538"/><rect x="27.8" y="122.7" width="11.7" height="11.8" fill="#2a2f32"/><rect x="39.2" y="122.7" width="11.7" height="11.8" fill="#252a2d"/><rect x="50.6" y="122.7" width="11.7" height="11.8" fill="#22272a"/><rect x="62.0" y="122.7" width="11.7" height="11.8" fill="#212629"/><rect x="73.5" y="122.7" width="11.7" height="11.8" fill="#22272a"/><rect x="84.9" y="122.7" width="11.7" height="11.8" fill="#24292c"/><rect x="96.3" y="122.7" width="11.7" height="11.8" fill="#272c2f"/><rect x="107.8" y="122.7" width="11.7" height="11.8" fill="#292e31"/><rect x="119.2" y="122.7" width="11.7" height="11.8" fill="#2b3033"/><rect x="130.6" y="122.7" width="11.7" height="11.8" fill="#2b3033"/><rect x="142.1" y="122.7" width="11.7" height="11.8" fill="#2b3033"/><rect x="153.5" y="122.7" width="11.7" height="11.8" fill="#2b3033"/><rect x="164.9" y="122.7" width="11.7" height="11.8" fill="#2a2f32"/><rect x="176.4" y="122.7" width="11.7" height="11.8" fill="#2a2f32"/><rect x="187.8" y="122.7" width="11.7" height="11.8" fill="#2b3033"/><rect x="199.2" y="122.7" width="11.7" height="11.8" fill="#2c3134"/><rect x="210.6" y="122.7" width="11.7" height="11.8" fill="#2d3235"/><rect x="222.1" y="122.7" width="11.7" height="11.8" fill="#2f3437"/><rect x="233.5" y="122.7" width="11.7" height="11.8" fill="#32373a"/><rect x="244.9" y="122.7" width="12.9" height="11.8" fill="#373e45"/><rect x="0.0" y="134.2" width="5.2" height="11.8" fill="#505558"/><rect x="4.9" y="134.2" width="11.7" height="11.8" fill="#3d4245"/><rect x="16.3" y="134.2" width="11.7" height="11.8" fill="#353a3d"/><rect x="27.8" y="134.2" width="11.7" height="11.8" fill="#303538"/><rect x="39.2" y="134.2" width="11.7" height="11.8" fill="#2d3235"/><rect x="50.6" y="134.2" width="11.7" height="11.8" fill="#2b3033"/><rect x="62.0" y="134.2" width="11.7" height="11.8" fill="#2a2f32"/><rect x="73.5" y="134.2" width="11.7" height="11.8" fill="#2b3033"/><rect x="84.9" y="134.2" width="11.7" height="11.8" fill="#2d3235"/><rect x="96.3" y="134.2" width="11.7" height="11.8" fill="#2e3336"/><rect x="107.8" y="134.2" width="11.7" height="11.8" fill="#303538"/><rect x="119.2" y="134.2" width="11.7" height="11.8" fill="#303538"/><rect x="130.6" y="134.2" width="11.7" height="11.8" fill="#313639"/><rect x="142.1" y="134.2" width="11.7" height="11.8" fill="#313639"/><rect x="153.5" y="134.2" width="11.7" height="11.8" fill="#313639"/><rect x="164.9" y="134.2" width="11.7" height="11.8" fill="#303538"/><rect x="176.4" y="134.2" width="11.7" height="11.8" fill="#303538"/><rect x="187.8" y="134.2" width="11.7" height="11.8" fill="#313639"/><rect x="199.2" y="134.2" width="11.7" height="11.8" fill="#313639"/><rect x="210.6" y="134.2" width="11.7" height="11.8" fill="#32373a"/><rect x="222.1" y="134.2" width="11.7" height="11.8" fill="#34393c"/><rect x="233.5" y="134.2" width="11.7" height="11.8" fill="#373c3f"/><rect x="244.9" y="134.2" width="12.9" height="11.8" fill="#3b4249"/><rect x="0.0" y="145.6" width="5.2" height="11.2" fill="#5e6366"/><rect x="4.9" y="145.6" width="11.7" height="11.2" fill="#4b5053"/><rect x="16.3" y="145.6" width="11.7" height="11.2" fill="#44494c"/><rect x="27.8" y="145.6" width="11.7" height="11.2" fill="#414649"/><rect x="39.2" y="145.6" width="11.7" height="11.2" fill="#3f4447"/><rect x="50.6" y="145.6" width="11.7" height="11.2" fill="#3d4245"/><rect x="62.0" y="145.6" width="11.7" height="11.2" fill="#3d4245"/><rect x="73.5" y="145.6" width="11.7" height="11.2" fill="#3d4245"/><rect x="84.9" y="145.6" width="11.7" height="11.2" fill="#3e4346"/><rect x="96.3" y="145.6" width="11.7" height="11.2" fill="#3f4447"/><rect x="107.8" y="145.6" width="11.7" height="11.2" fill="#3f4447"/><rect x="119.2" y="145.6" width="11.7" height="11.2" fill="#3f4447"/><rect x="130.6" y="145.6" width="11.7" height="11.2" fill="#3f4447"/><rect x="142.1" y="145.6" width="11.7" height="11.2" fill="#3f4447"/><rect x="153.5" y="145.6" width="11.7" height="11.2" fill="#3f4447"/><rect x="164.9" y="145.6" width="11.7" height="11.2" fill="#3f4447"/><rect x="176.4" y="145.6" width="11.7" height="11.2" fill="#3f4447"/><rect x="187.8" y="145.6" width="11.7" height="11.2" fill="#404548"/><rect x="199.2" y="145.6" width="11.7" height="11.2" fill="#404548"/><rect x="210.6" y="145.6" width="11.7" height="11.2" fill="#414649"/><rect x="222.1" y="145.6" width="11.7" height="11.2" fill="#42474a"/><rect x="233.5" y="145.6" width="11.7" height="11.2" fill="#454a4d"/><rect x="244.9" y="145.6" width="12.9" height="11.2" fill="#495057"/><rect x="0.0" y="156.5" width="5.2" height="2.3" fill="#6c7174"/><rect x="4.9" y="156.5" width="11.7" height="2.3" fill="#6c7174"/><rect x="16.3" y="156.5" width="11.7" height="2.3" fill="#6c7174"/><rect x="27.8" y="156.5" width="11.7" height="2.3" fill="#6b7073"/><rect x="39.2" y="156.5" width="11.7" height="2.3" fill="#6b7073"/><rect x="50.6" y="156.5" width="11.7" height="2.3" fill="#6b7073"/><rect x="62.0" y="156.5" width="11.7" height="2.3" fill="#6a6f72"/><rect x="73.5" y="156.5" width="11.7" height="2.3" fill="#696e71"/><rect x="84.9" y="156.5" width="11.7" height="2.3" fill="#686d70"/><rect x="96.3" y="156.5" width="11.7" height="2.3" fill="#676c6f"/><rect x="107.8" y="156.5" width="11.7" height="2.3" fill="#666b6e"/><rect x="119.2" y="156.5" width="11.7" height="2.3" fill="#656a6d"/><rect x="130.6" y="156.5" width="11.7" height="2.3" fill="#64696c"/><rect x="142.1" y="156.5" width="11.7" height="2.3" fill="#63686b"/><rect x="153.5" y="156.5" width="11.7" height="2.3" fill="#62676a"/><rect x="164.9" y="156.5" width="11.7" height="2.3" fill="#62676a"/><rect x="176.4" y="156.5" width="11.7" height="2.3" fill="#62676a"/><rect x="187.8" y="156.5" width="11.7" height="2.3" fill="#63686b"/><rect x="199.2" y="156.5" width="11.7" height="2.3" fill="#63686b"/><rect x="210.6" y="156.5" width="11.7" height="2.3" fill="#64696c"/><rect x="222.1" y="156.5" width="11.7" height="2.3" fill="#656a6d"/><rect x="233.5" y="156.5" width="11.7" height="2.3" fill="#666b6e"/><rect x="244.9" y="156.5" width="12.9" height="2.3" fill="#666d74"/></svg>
 <div class="abs lg" style="left:267.6px;top:739px;color:#7fb4d6;letter-spacing:0.75px">INFO
INFO
INFO
INFO
INFO
INFO
INFO
INFO</div>
 <div class="abs lg" style="left:307.2px;top:739px;letter-spacing:0.74px">Row data<b style="font-weight:normal">:</b>
field_3 = false
field_1 = demo 1
field_2 = 1
Row data<b style="font-weight:normal">:</b>
field_3 = true
field_1 = demo 2
field_2 = 2</div>
</div>
</body>
</html>
